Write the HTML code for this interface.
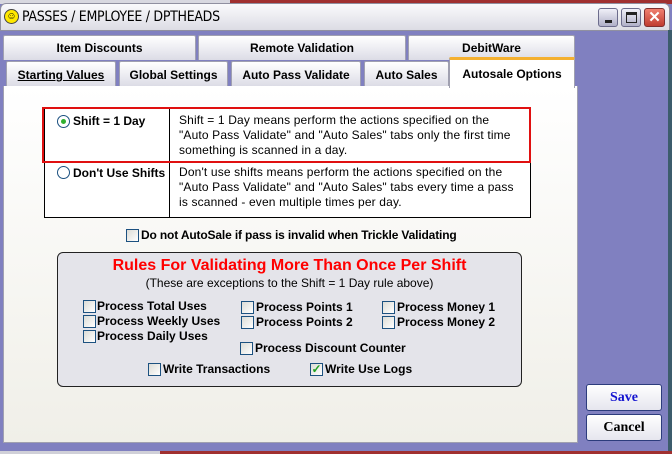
<!DOCTYPE html>
<html><head><style>
*{box-sizing:border-box;margin:0;padding:0}
body{width:672px;height:454px;overflow:hidden;background:#8080c0;font-family:"Liberation Sans",Arial,sans-serif;position:relative}
.abs{position:absolute}
.tab{position:absolute;border:1px solid #a0a0b0;border-bottom:none;background:linear-gradient(#fff,#dcdce6);font-weight:bold;font-size:12px;text-align:center;color:#000;border-radius:2px 2px 0 0}
.cb{position:absolute;width:13px;height:13px;border:1px solid #1c5180;background:linear-gradient(135deg,#dcdcd6,#fff)}
.lbl{position:absolute;font-weight:bold;font-size:12px;white-space:nowrap}
.btn{position:absolute;width:76px;height:27px;border:1px solid #2c3c7c;border-radius:3px;background:linear-gradient(#fff,#e6e6ee);font-family:"Liberation Serif",serif;font-weight:bold;font-size:14px;text-align:center;line-height:25px}
</style></head><body>
<div class="abs" style="left:0;top:0;width:672px;height:4px;background:#d8d8e0"></div>
<div class="abs" style="left:230px;top:0;width:442px;height:4px;background:#a03030"></div>
<div class="abs" style="left:0;top:3px;width:670px;height:28px;background:linear-gradient(#fafafc,#dcdce4);border-radius:6px 6px 0 0;border:1px solid #9090a0"></div>
<div class="abs" style="left:4px;top:9px;width:15px;height:15px;border-radius:50%;background:#ffe800;border:1px solid #444;font-size:10px;line-height:13px;text-align:center">☺</div>
<div class="abs" style="left:22px;top:9px;font-size:14px;font-family:'DejaVu Sans Condensed','Liberation Sans',sans-serif;letter-spacing:-0.3px">PASSES / EMPLOYEE / DPTHEADS</div>
<div class="abs" style="left:598px;top:8px;width:20px;height:19px;border:1px solid #6c6c8c;border-radius:3px;background:linear-gradient(#f0f0f8,#b0b0c8)"><div class="abs" style="left:6px;top:11px;width:7px;height:3px;background:#222"></div></div>
<div class="abs" style="left:621px;top:8px;width:20px;height:19px;border:1px solid #6c6c8c;border-radius:3px;background:linear-gradient(#f0f0f8,#b0b0c8)"><div class="abs" style="left:4px;top:3px;width:11px;height:11px;border:1px solid #222;border-top-width:3px"></div></div>
<div class="abs" style="left:644px;top:8px;width:21px;height:19px;border:1px solid #803030;border-radius:3px;background:linear-gradient(#f08070,#c03c30);color:#fff;font-weight:bold;font-size:15px;line-height:17px;text-align:center">✕</div>
<div class="abs" style="left:668px;top:30px;width:4px;height:424px;background:#3c5c6c"></div>

<div class="tab" style="left:3px;top:35px;width:193px;height:25px;line-height:24px">Item Discounts</div>
<div class="tab" style="left:198px;top:35px;width:208px;height:25px;line-height:24px">Remote Validation</div>
<div class="tab" style="left:408px;top:35px;width:167px;height:25px;line-height:24px">DebitWare</div>
<div class="tab" style="left:6px;top:61px;width:110px;height:25px;line-height:26px;text-decoration:underline">Starting Values</div>
<div class="tab" style="left:119px;top:61px;width:109px;height:25px;line-height:26px">Global Settings</div>
<div class="tab" style="left:231px;top:61px;width:130px;height:25px;line-height:26px">Auto Pass Validate</div>
<div class="tab" style="left:364px;top:61px;width:85px;height:25px;line-height:26px">Auto Sales</div>
<div class="abs" style="left:3px;top:86px;width:575px;height:357px;background:linear-gradient(#fff,#f0efe8);border:1px solid #a0a0b0;border-top:none"></div>
<div class="tab" style="left:449px;top:57px;width:126px;height:31px;line-height:28px;background:#fff;border-top:3px solid #f4b030">Autosale Options</div>

<div class="abs" style="left:44px;top:108px;width:487px;height:110px;border:1px solid #000;background:#fff"></div>
<div class="abs" style="left:169px;top:108px;width:1px;height:110px;background:#000"></div>
<div class="abs" style="left:44px;top:161px;width:487px;height:1px;background:#000"></div>
<div class="abs" style="left:42px;top:107px;width:489px;height:56px;border:2px solid #e01010"></div>
<div class="abs" style="left:57px;top:115px;width:13px;height:13px;border-radius:50%;border:1px solid #1c5180;background:#fff"><div class="abs" style="left:3px;top:3px;width:5px;height:5px;border-radius:50%;background:#30b030"></div></div>
<div class="lbl" style="left:73px;top:114px">Shift = 1 Day</div>
<div class="abs" style="left:57px;top:166px;width:13px;height:13px;border-radius:50%;border:1px solid #1c5180;background:#fff"></div>
<div class="lbl" style="left:73px;top:166px">Don't Use Shifts</div>
<div class="abs" style="left:179px;top:113px;font-size:12px;line-height:15px;letter-spacing:0.15px">Shift = 1 Day means perform the actions specified on the<br>"Auto Pass Validate" and "Auto Sales" tabs only the first time<br>something is scanned in a day.</div>
<div class="abs" style="left:179px;top:165px;font-size:12px;line-height:15px;letter-spacing:0.15px">Don't use shifts means perform the actions specified on the<br>"Auto Pass Validate" and "Auto Sales" tabs every time a pass<br>is scanned - even multiple times per day.</div>
<div class="cb" style="left:126px;top:229px"></div>
<div class="lbl" style="left:141px;top:228px;letter-spacing:-0.15px">Do not AutoSale if pass is invalid when Trickle Validating</div>

<div class="abs" style="left:57px;top:252px;width:465px;height:135px;border:1px solid #222;border-radius:6px;background:#e4e4ea"></div>
<div class="abs" style="left:57px;top:257px;width:465px;text-align:center;color:#ff0000;font-size:16px;font-weight:bold">Rules For Validating More Than Once Per Shift</div>
<div class="abs" style="left:57px;top:276px;width:465px;text-align:center;font-size:12px">(These are exceptions to the Shift = 1 Day rule above)</div>
<div class="cb" style="left:83px;top:300px"></div><div class="lbl" style="left:97px;top:299px">Process Total Uses</div>
<div class="cb" style="left:83px;top:315px"></div><div class="lbl" style="left:97px;top:314px">Process Weekly Uses</div>
<div class="cb" style="left:83px;top:330px"></div><div class="lbl" style="left:97px;top:329px">Process Daily Uses</div>
<div class="cb" style="left:241px;top:301px"></div><div class="lbl" style="left:256px;top:300px">Process Points 1</div>
<div class="cb" style="left:241px;top:316px"></div><div class="lbl" style="left:256px;top:315px">Process Points 2</div>
<div class="cb" style="left:382px;top:301px"></div><div class="lbl" style="left:397px;top:300px">Process Money 1</div>
<div class="cb" style="left:382px;top:316px"></div><div class="lbl" style="left:397px;top:315px">Process Money 2</div>
<div class="cb" style="left:240px;top:342px"></div><div class="lbl" style="left:255px;top:341px">Process Discount Counter</div>
<div class="cb" style="left:148px;top:363px"></div><div class="lbl" style="left:163px;top:362px">Write Transactions</div>
<div class="cb" style="left:310px;top:363px;color:#21a121;font-size:12px;line-height:11px;text-align:center;font-weight:bold">✓</div><div class="lbl" style="left:325px;top:362px">Write Use Logs</div>

<div class="btn" style="left:586px;top:384px;color:#1414d0">Save</div>
<div class="btn" style="left:586px;top:414px">Cancel</div>
<div class="abs" style="left:0;top:451px;width:672px;height:3px;background:#d0d0d8"></div>
<div class="abs" style="left:160px;top:451px;width:512px;height:3px;background:#a03030"></div>
</body></html>
